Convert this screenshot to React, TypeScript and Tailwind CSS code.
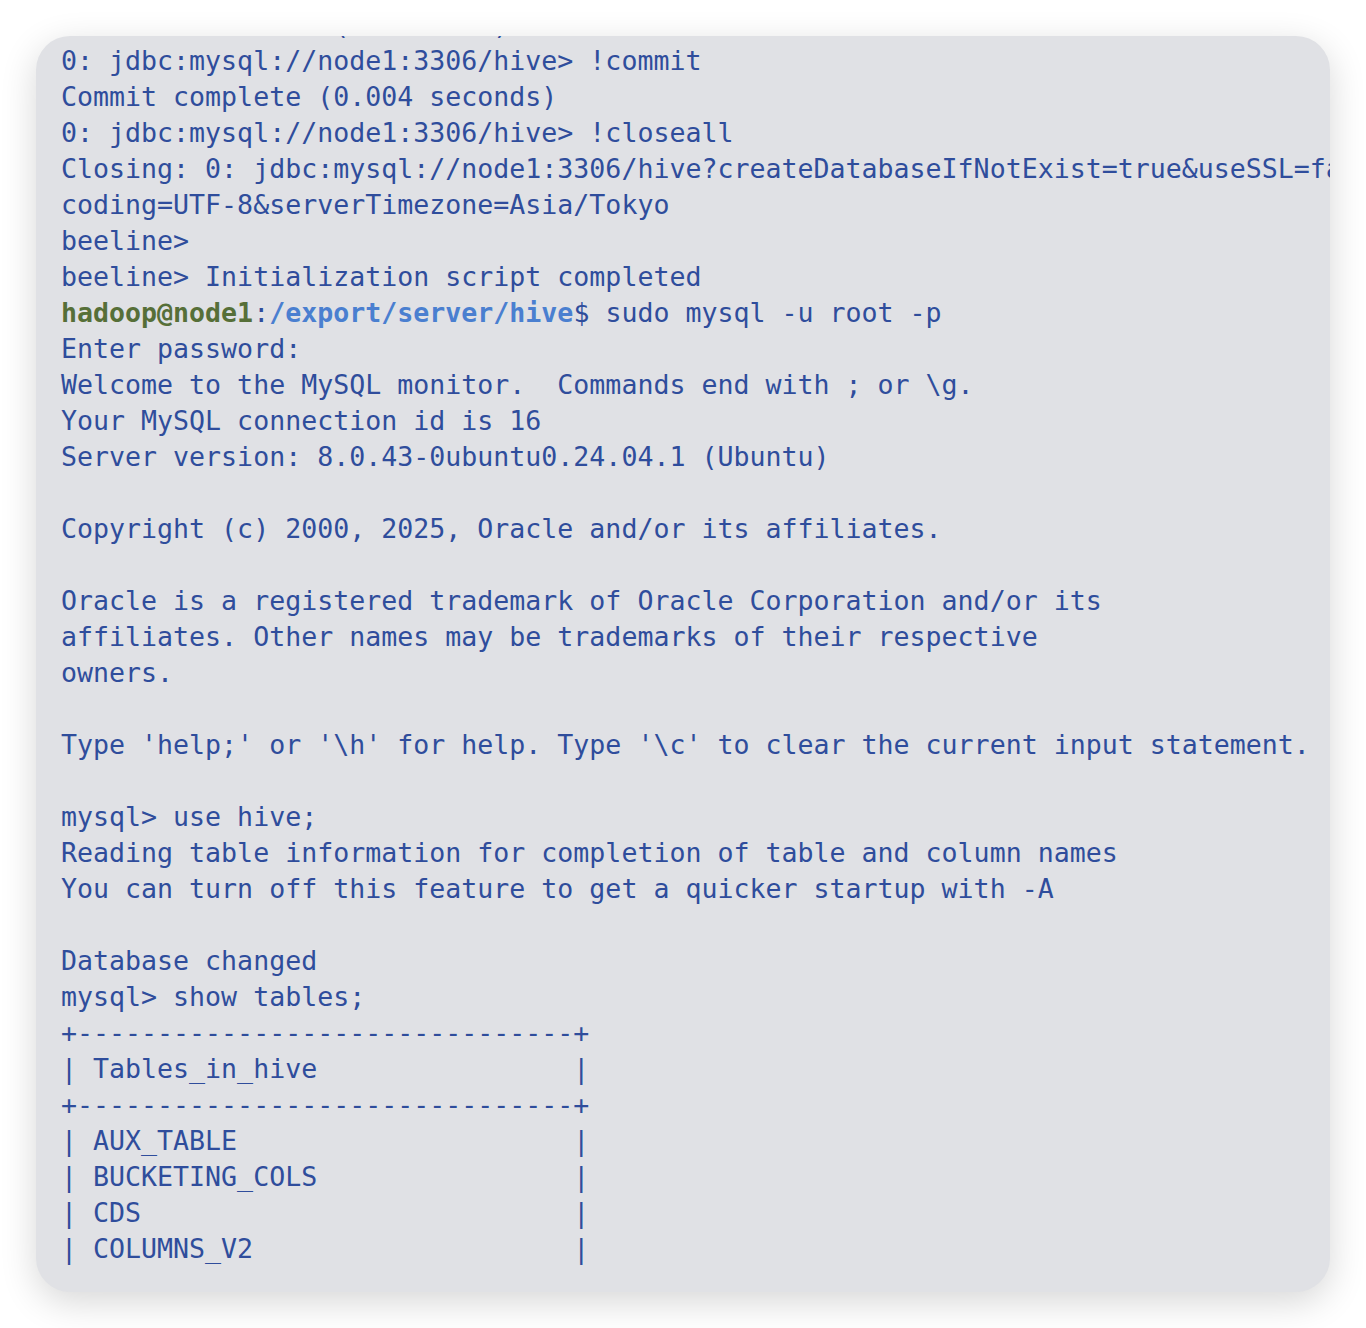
const lines: string[] = [
  "No rows affected (0.004 sec)",
  "0: jdbc:mysql://node1:3306/hive> !commit",
  "Commit complete (0.004 seconds)",
  "0: jdbc:mysql://node1:3306/hive> !closeall",
  "Closing: 0: jdbc:mysql://node1:3306/hive?createDatabaseIfNotExist=true&useSSL=false&characterEn",
  "coding=UTF-8&serverTimezone=Asia/Tokyo",
  "beeline>",
  "beeline> Initialization script completed",
  "__PROMPT__",
  "Enter password:",
  "Welcome to the MySQL monitor.  Commands end with ; or \\g.",
  "Your MySQL connection id is 16",
  "Server version: 8.0.43-0ubuntu0.24.04.1 (Ubuntu)",
  "",
  "Copyright (c) 2000, 2025, Oracle and/or its affiliates.",
  "",
  "Oracle is a registered trademark of Oracle Corporation and/or its",
  "affiliates. Other names may be trademarks of their respective",
  "owners.",
  "",
  "Type 'help;' or '\\h' for help. Type '\\c' to clear the current input statement.",
  "",
  "mysql> use hive;",
  "Reading table information for completion of table and column names",
  "You can turn off this feature to get a quicker startup with -A",
  "",
  "Database changed",
  "mysql> show tables;",
  "+-------------------------------+",
  "| Tables_in_hive                |",
  "+-------------------------------+",
  "| AUX_TABLE                     |",
  "| BUCKETING_COLS                |",
  "| CDS                           |",
  "| COLUMNS_V2                    |",
];

const App = () => {
  return (
    <div className="min-h-[1328px] bg-white pt-[36px] pl-[36px]">
      <div className="w-[1294px] h-[1256px] rounded-[34px] bg-[#e0e1e5] overflow-hidden shadow-[0_10px_36px_rgba(0,0,0,0.16)]">
        <div className="-mt-[29px] pl-[25px] font-['DejaVu_Sans_Mono',monospace] text-[26.6px] leading-[36px] text-[#2f4d9c] whitespace-pre">
          {lines.map((line, index) =>
            line === "__PROMPT__" ? (
              <div key={index} className="h-[36px]">
                <span className="font-bold text-[#566f38]">hadoop@node1</span>
                <span>:</span>
                <span className="font-bold text-[#4a7fd0]">/export/server/hive</span>
                <span>$ sudo mysql -u root -p</span>
              </div>
            ) : (
              <div key={index} className="h-[36px]">
                {line}
              </div>
            )
          )}
        </div>
      </div>
    </div>
  );
};

export default App;
